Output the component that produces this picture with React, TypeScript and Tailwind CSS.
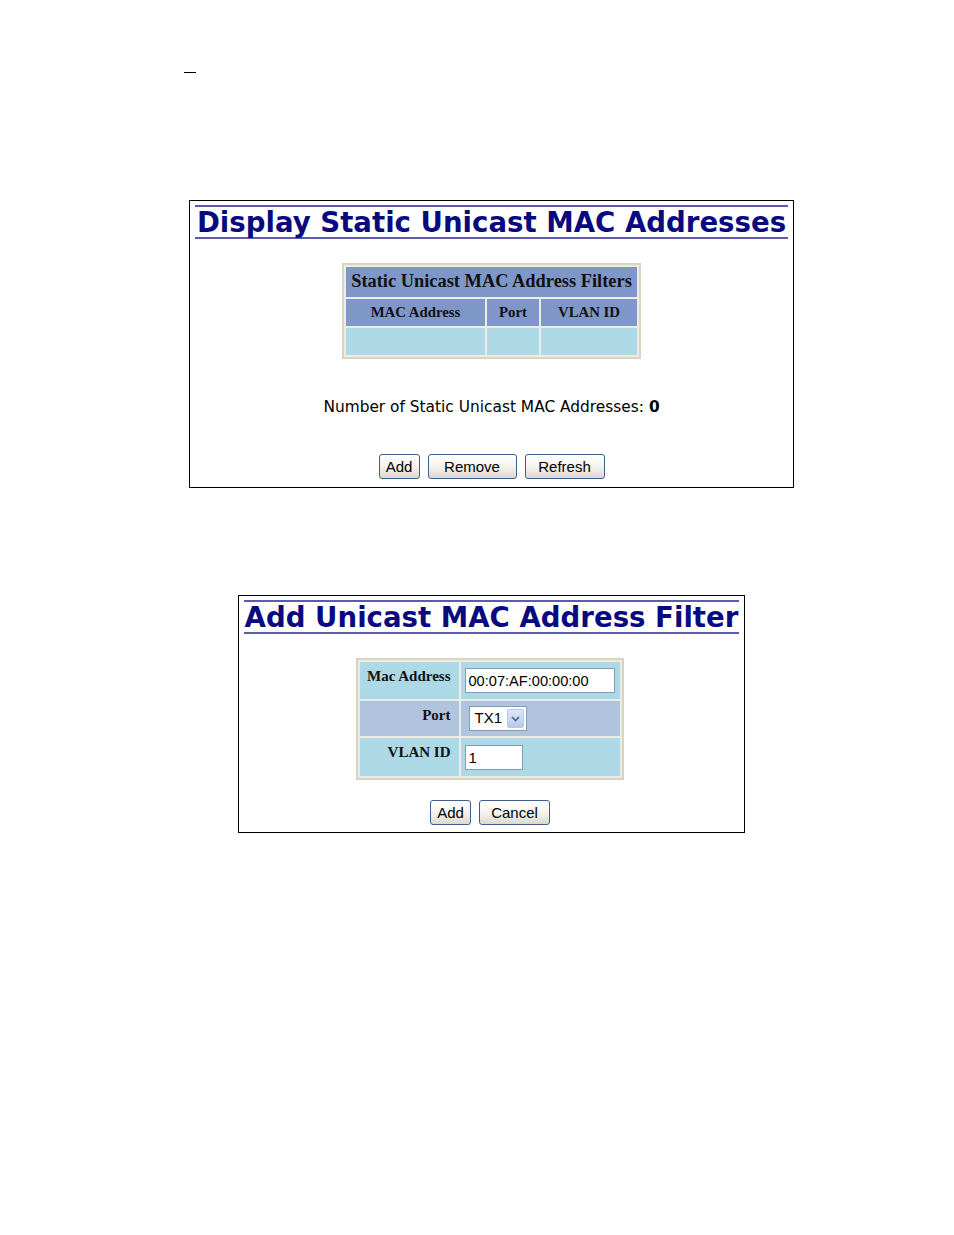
import React from 'react'

const verdana = "font-['Verdana','DejaVu_Sans',sans-serif]"
const serif = "font-['Liberation_Serif','Times_New_Roman',serif]"
const arial = "font-['Liberation_Sans',Arial,sans-serif]"

function Btn({ label, w }: { label: string; w: string }) {
  return (
    <button
      className={`${arial} ${w} h-[25px] text-[15px] text-black rounded-[3px] border border-[#3e5f8a] bg-gradient-to-b from-white via-[#f4f3ee] to-[#dcd9cc] leading-none`}
    >
      {label}
    </button>
  )
}

function Title({ text }: { text: string }) {
  return (
    <div className="px-[5px] pt-[4px]">
      <div className="border-t-2 border-b-2 border-[#5c5caa]">
        <h1 className={`${verdana} font-bold text-[27.6px] text-[#0a0a80] leading-[28px] pt-[2px] text-center whitespace-nowrap`}>{text}</h1>
      </div>
    </div>
  )
}

export default function App() {
  return (
    <div className="w-[954px] h-[1235px] bg-white relative">
      <div className="pt-[72px] pl-[184px]">
        <div className="w-[12px] h-[1px] bg-black" />
      </div>

      <div className="ml-[189px] mt-[127px] w-[605px] h-[288px] border border-black flex flex-col">
        <Title text="Display Static Unicast MAC Addresses" />
        <div className="flex justify-center mt-[24px]">
          <table className="border-2 border-[#d8d4c4] bg-[#ecebe4] border-separate border-spacing-[2px]">
            <tbody>
              <tr>
                <td colSpan={3} className={`${serif} font-bold text-[18.4px] text-[#111] bg-[#7f97c8] h-[30px] px-[3px] text-center whitespace-nowrap`}>
                  Static Unicast MAC Address Filters
                </td>
              </tr>
              <tr className={`${serif} font-bold text-[14.8px] text-[#111]`}>
                <td className="bg-[#7f97c8] w-[139px] h-[27px] text-center">MAC Address</td>
                <td className="bg-[#7f97c8] w-[52px] text-center">Port</td>
                <td className="bg-[#7f97c8] w-[96px] text-center">VLAN ID</td>
              </tr>
              <tr>
                <td className="bg-[#add8e6] h-[27px]" />
                <td className="bg-[#add8e6]" />
                <td className="bg-[#add8e6]" />
              </tr>
            </tbody>
          </table>
        </div>
        <p className={`${verdana} text-[15.4px] text-black text-center mt-[37px]`}>
          Number of Static Unicast MAC Addresses: <b>0</b>
        </p>
        <div className="flex justify-center gap-[8px] mt-[35px]">
          <Btn label="Add" w="w-[41px]" />
          <Btn label="Remove" w="w-[89px]" />
          <Btn label="Refresh" w="w-[80px]" />
        </div>
      </div>

      <div className="ml-[238px] mt-[107px] w-[507px] h-[238px] border border-black flex flex-col">
        <Title text="Add Unicast MAC Address Filter" />
        <div className="flex justify-center mt-[24px] pr-[4px]">
          <table className="border-2 border-[#d8d4c4] bg-[#ecebe4] border-separate border-spacing-[2px]">
            <tbody className={`${serif} font-bold text-[15px] text-[#111]`}>
              <tr>
                <td className="bg-[#add8e6] w-[99px] h-[37px] align-top text-right pr-[8px] pt-[3px] whitespace-nowrap">Mac Address</td>
                <td className="bg-[#add8e6] w-[159px] px-[4px]">
                  <input
                    defaultValue="00:07:AF:00:00:00"
                    className={`${arial} font-normal w-[150px] h-[25px] border border-[#7f9db9] bg-white text-[14.6px] px-[3px] text-black outline-none`}
                  />
                </td>
              </tr>
              <tr>
                <td className="bg-[#b0c4de] h-[35px] align-top text-right pr-[8px] pt-[3px]">Port</td>
                <td className="bg-[#b0c4de] pl-[8px]">
                  <div className={`${arial} font-normal w-[58px] h-[25px] border border-[#7f9db9] bg-white flex items-center justify-between pl-[5px] pr-[2px] text-[15px] text-black`}>
                    <span>TX1</span>
                    <span className="w-[17px] h-[19px] rounded-[2px] bg-gradient-to-b from-[#dfe8f8] to-[#b7c9ee] border border-[#b8c8e8] flex items-center justify-center">
                      <svg width="9" height="6" viewBox="0 0 9 6">
                        <path d="M1 1 L4.5 4.5 L8 1" fill="none" stroke="#4d6185" strokeWidth="1.6" />
                      </svg>
                    </span>
                  </div>
                </td>
              </tr>
              <tr>
                <td className="bg-[#add8e6] h-[38px] align-top text-right pr-[8px] pt-[3px]">VLAN ID</td>
                <td className="bg-[#add8e6] px-[4px]">
                  <input
                    defaultValue="1"
                    className={`${arial} font-normal w-[58px] h-[25px] border border-[#7f9db9] bg-white text-[15px] px-[3px] text-black outline-none`}
                  />
                </td>
              </tr>
            </tbody>
          </table>
        </div>
        <div className="flex justify-center gap-[8px] mt-[20px] pr-[3px]">
          <Btn label="Add" w="w-[41px]" />
          <Btn label="Cancel" w="w-[71px]" />
        </div>
      </div>
    </div>
  )
}
